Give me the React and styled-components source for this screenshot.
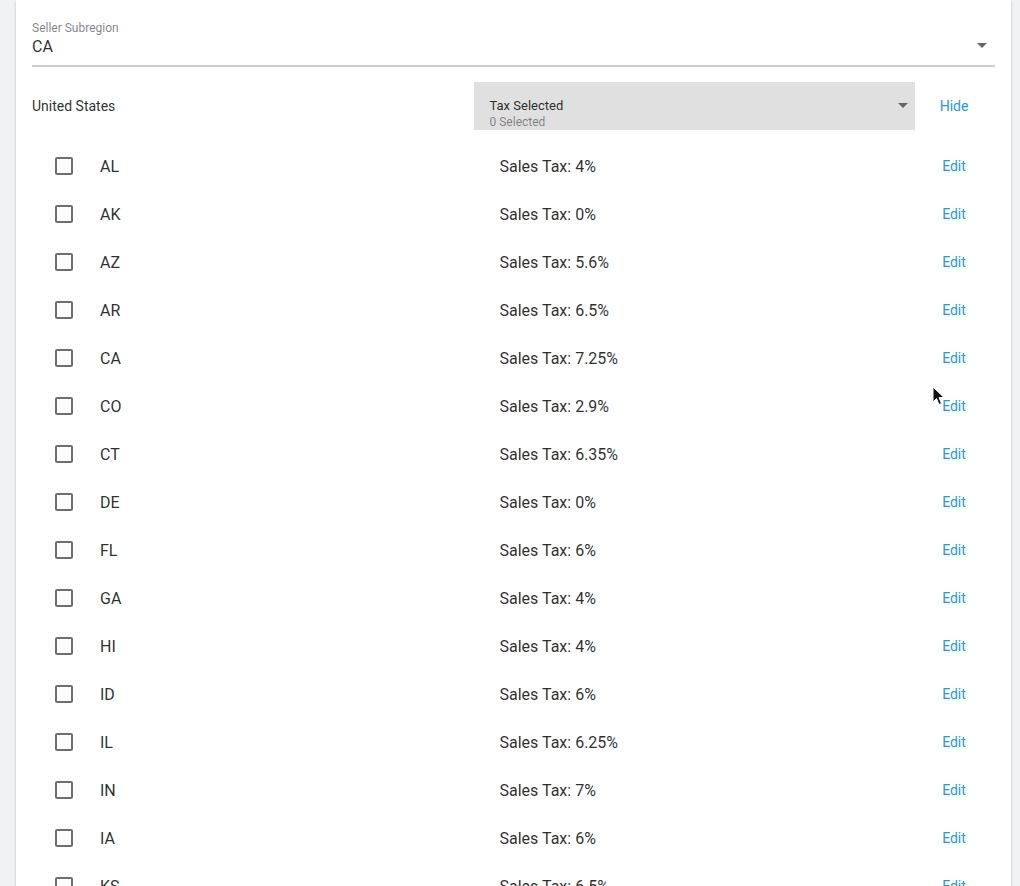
import React from 'react';
import styled, { createGlobalStyle } from 'styled-components';

const GlobalStyle = createGlobalStyle`
    body {
        margin: 0;
        background: #f1f2f4;
        font-family: Roboto, "Liberation Sans", sans-serif;
        color: rgba(0, 0, 0, 0.84);
        overflow: hidden;
    }
`;

const Page = styled.div`
    position: relative;
    padding: 0 9px 0 16px;
`;

const Card = styled.div`
    background: #fff;
    box-shadow: 0 1px 3px rgba(0, 0, 0, 0.18), 0 1px 1px rgba(0, 0, 0, 0.08);
    padding: 21px 16px 40px 16px;
`;

const SubregionField = styled.div`
    display: flex;
    flex-direction: column;
    border-bottom: 2px solid #cfcfcf;
    position: relative;
    padding-bottom: 8px;
`;

const FieldLabel = styled.div`
    font-size: 12px;
    line-height: 14px;
    color: rgba(0, 0, 0, 0.5);
`;

const FieldValue = styled.div`
    font-size: 16px;
    line-height: 21px;
    margin-top: 1px;
`;

const Caret = styled.div`
    position: absolute;
    right: ${({ right }) => right}px;
    top: ${({ top }) => top}px;
    width: 0;
    height: 0;
    border-left: 5px solid transparent;
    border-right: 5px solid transparent;
    border-top: 5px solid #666;
`;

const Grid = styled.div`
    display: grid;
    grid-template-columns: 1fr 1fr 80px;
    align-items: center;
`;

const HeaderRow = styled(Grid)`
    margin-top: 15px;
    margin-bottom: 12px;
    height: 48px;
`;

const Country = styled.div`
    font-size: 14px;
`;

const TaxSelect = styled.div`
    position: relative;
    height: 48px;
    background: #e0e0e0;
    padding: 16px 17px 0 16px;
    box-sizing: border-box;
`;

const TaxTitle = styled.div`
    font-size: 13px;
    line-height: 15px;
`;

const TaxSub = styled.div`
    font-size: 12px;
    line-height: 16px;
    margin-top: 1px;
    color: rgba(0, 0, 0, 0.45);
`;

const Action = styled.div`
    font-size: 14px;
    color: #2196f3;
    text-align: center;
    padding-right: 2px;
    cursor: pointer;
`;

const Row = styled(Grid)`
    height: 48px;
`;

const StateCell = styled.div`
    display: flex;
    align-items: center;
`;

const Checkbox = styled.div`
    width: 14px;
    height: 14px;
    border: 2px solid #6f6f6f;
    border-radius: 2px;
    margin-left: 23px;
`;

const StateName = styled.div`
    font-size: 16px;
    margin-left: 27px;
`;

const TaxText = styled.div`
    font-size: 16px;
    padding-left: 26px;
`;

const Cursor = styled.svg`
    position: absolute;
    left: 932px;
    top: 386px;
`;

const states = [
    ['AL', '4%'], ['AK', '0%'], ['AZ', '5.6%'], ['AR', '6.5%'], ['CA', '7.25%'],
    ['CO', '2.9%'], ['CT', '6.35%'], ['DE', '0%'], ['FL', '6%'], ['GA', '4%'],
    ['HI', '4%'], ['ID', '6%'], ['IL', '6.25%'], ['IN', '7%'], ['IA', '6%'],
    ['KS', '6.5%'], ['KY', '6%'], ['LA', '4.45%'],
];

const App = () => {
    return (
        <Page>
            <GlobalStyle />
            <Card>
                <SubregionField>
                    <FieldLabel>Seller Subregion</FieldLabel>
                    <FieldValue>CA</FieldValue>
                    <Caret right={8} top={22} />
                </SubregionField>
                <HeaderRow>
                    <Country>United States</Country>
                    <TaxSelect>
                        <TaxTitle>Tax Selected</TaxTitle>
                        <TaxSub>0 Selected</TaxSub>
                        <Caret right={7} top={21} />
                    </TaxSelect>
                    <Action>Hide</Action>
                </HeaderRow>
                {states.map(([code, tax]) => (
                    <Row key={code}>
                        <StateCell>
                            <Checkbox />
                            <StateName>{code}</StateName>
                        </StateCell>
                        <TaxText>Sales Tax: {tax}</TaxText>
                        <Action>Edit</Action>
                    </Row>
                ))}
            </Card>
            <Cursor width="14" height="20" viewBox="0 0 14 20">
                <path d="M1 1 L1 16 L4.5 12.5 L7 18.5 L9.5 17.5 L7 11.5 L12 11.5 Z" fill="#111" stroke="#fff" strokeWidth="1" />
            </Cursor>
        </Page>
    );
};

export default App;
